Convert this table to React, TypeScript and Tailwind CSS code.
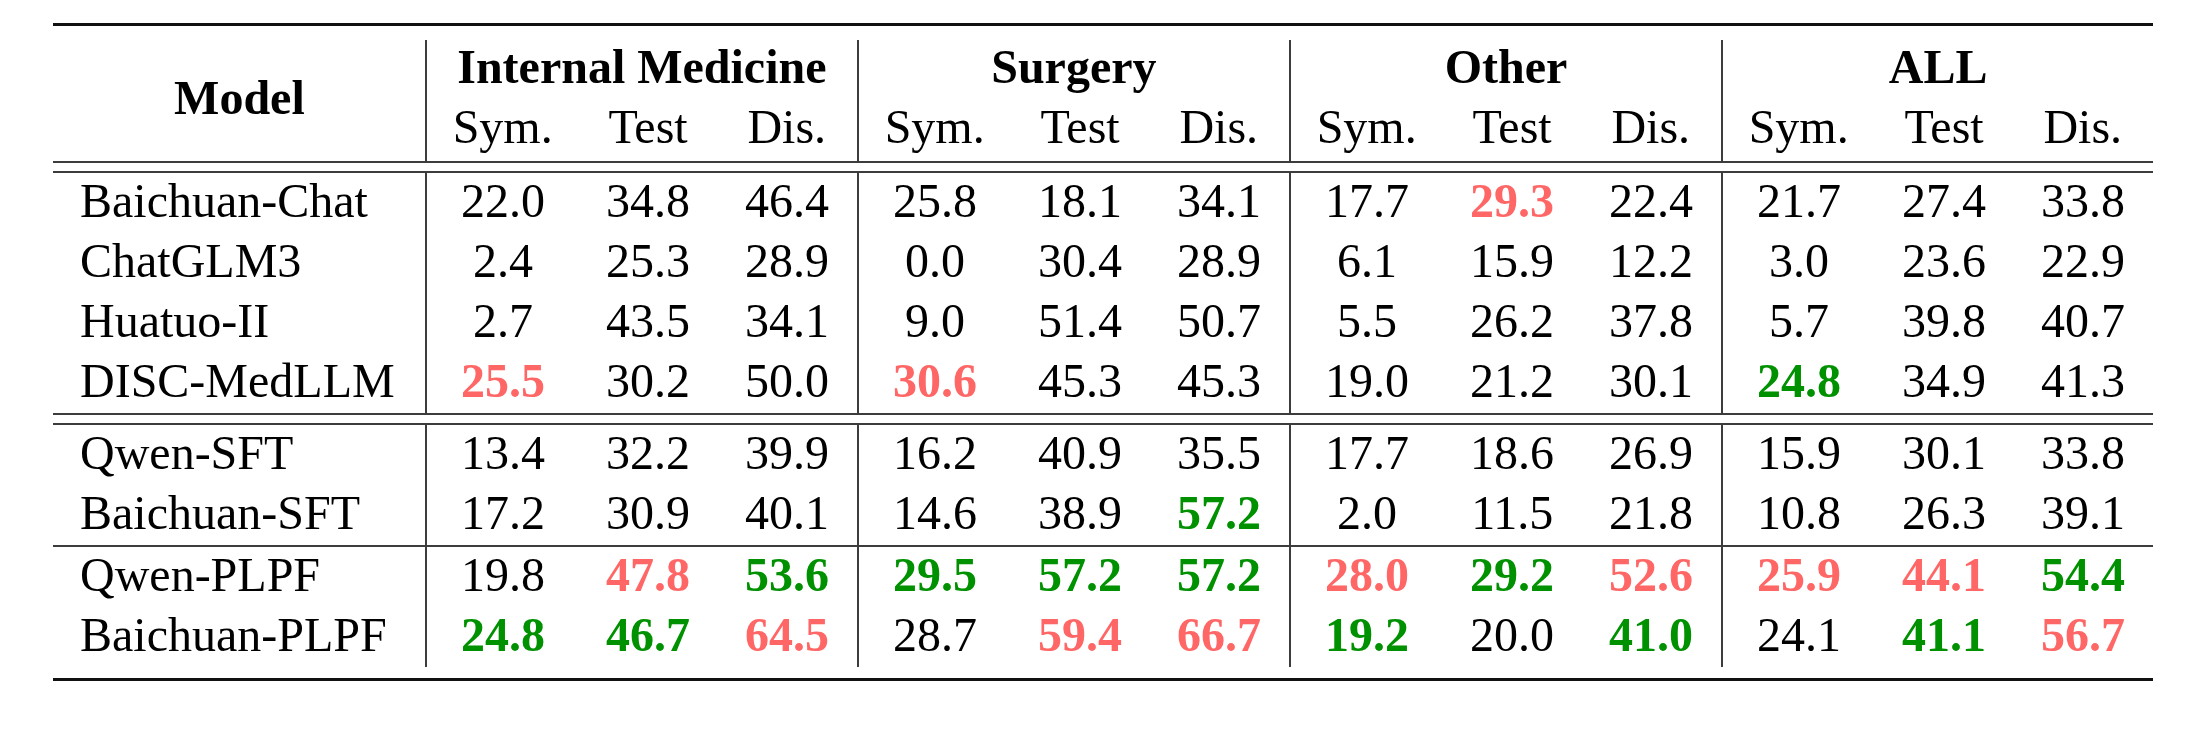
import React from "react";

type Cell = { v: string; c?: "r" | "g" };

const n = (v: string): Cell => ({ v });
const r = (v: string): Cell => ({ v, c: "r" });
const g = (v: string): Cell => ({ v, c: "g" });

const groupA: [string, Cell[]][] = [
  ["Baichuan-Chat", [n("22.0"), n("34.8"), n("46.4"), n("25.8"), n("18.1"), n("34.1"), n("17.7"), r("29.3"), n("22.4"), n("21.7"), n("27.4"), n("33.8")]],
  ["ChatGLM3", [n("2.4"), n("25.3"), n("28.9"), n("0.0"), n("30.4"), n("28.9"), n("6.1"), n("15.9"), n("12.2"), n("3.0"), n("23.6"), n("22.9")]],
  ["Huatuo-II", [n("2.7"), n("43.5"), n("34.1"), n("9.0"), n("51.4"), n("50.7"), n("5.5"), n("26.2"), n("37.8"), n("5.7"), n("39.8"), n("40.7")]],
  ["DISC-MedLLM", [r("25.5"), n("30.2"), n("50.0"), r("30.6"), n("45.3"), n("45.3"), n("19.0"), n("21.2"), n("30.1"), g("24.8"), n("34.9"), n("41.3")]],
];

const groupB: [string, Cell[]][] = [
  ["Qwen-SFT", [n("13.4"), n("32.2"), n("39.9"), n("16.2"), n("40.9"), n("35.5"), n("17.7"), n("18.6"), n("26.9"), n("15.9"), n("30.1"), n("33.8")]],
  ["Baichuan-SFT", [n("17.2"), n("30.9"), n("40.1"), n("14.6"), n("38.9"), g("57.2"), n("2.0"), n("11.5"), n("21.8"), n("10.8"), n("26.3"), n("39.1")]],
];

const groupC: [string, Cell[]][] = [
  ["Qwen-PLPF", [n("19.8"), r("47.8"), g("53.6"), g("29.5"), g("57.2"), g("57.2"), r("28.0"), g("29.2"), r("52.6"), r("25.9"), r("44.1"), g("54.4")]],
  ["Baichuan-PLPF", [g("24.8"), g("46.7"), r("64.5"), n("28.7"), r("59.4"), r("66.7"), g("19.2"), n("20.0"), g("41.0"), n("24.1"), g("41.1"), r("56.7")]],
];

const gridCols =
  "grid grid-cols-[372px_154px_138px_140px_154px_138px_140px_154px_138px_140px_154px_138px_140px]";

function T({ children, left }: { children: React.ReactNode; left?: boolean }) {
  return (
    <span
      className={`inline-block whitespace-nowrap text-[40px] leading-[45px] scale-[1.2] ${
        left ? "origin-left" : "origin-center"
      }`}
    >
      {children}
    </span>
  );
}

function Row({ name, cells, ruleTop }: { name: string; cells: Cell[]; ruleTop?: boolean }) {
  const h = ruleTop ? "h-[62px] border-t-2 border-t-[#3c3c3c]" : "h-[60px]";
  return (
    <>
      <div className={`${h} pb-[6px] pl-[27px] flex items-center justify-start`}>
        <T left>{name}</T>
      </div>
      {cells.map((c, i) => {
        const vline = i % 3 === 0 ? "border-l-2 border-l-[#3c3c3c]" : "";
        const color =
          c.c === "r" ? "text-[#ff6666] font-bold" : c.c === "g" ? "text-[#009100] font-bold" : "text-black";
        return (
          <div key={i} className={`${h} ${vline} ${color} pb-[6px] flex items-center justify-center`}>
            <T>{c.v}</T>
          </div>
        );
      })}
    </>
  );
}

function DoubleRule() {
  return (
    <div className="flex flex-col">
      <div className="h-[2px] bg-[#3c3c3c]" />
      <div className="h-[8px]" />
      <div className="h-[2px] bg-[#3c3c3c]" />
    </div>
  );
}

export default function App() {
  const groups = ["Internal Medicine", "Surgery", "Other", "ALL"];
  const subs = ["Sym.", "Test", "Dis."];
  return (
    <div className="w-[2208px] h-[731px] bg-white pt-[23px] pl-[53px] text-black text-[40px] font-['Liberation_Serif','Times_New_Roman',serif]">
      <div className="w-[2100px] flex flex-col">
        <div className="h-[3px] bg-[#111]" />
        <div className="h-[14px]" />
        <div className={`${gridCols} grid-rows-[60px_61px]`}>
          <div className="row-span-2 flex items-center justify-center font-bold pb-[7px]">
            <T>Model</T>
          </div>
          {groups.map((gname) => (
            <div
              key={gname}
              className="col-span-3 border-l-2 border-l-[#3c3c3c] flex items-center justify-center font-bold pb-[8px]"
            >
              <T>{gname}</T>
            </div>
          ))}
          {groups.map((gname) =>
            subs.map((s, i) => (
              <div
                key={gname + s}
                className={`${i === 0 ? "border-l-2 border-l-[#3c3c3c]" : ""} flex items-center justify-center pb-[9px]`}
              >
                <T>{s}</T>
              </div>
            ))
          )}
        </div>
        <DoubleRule />
        <div className={gridCols}>
          {groupA.map(([name, cells]) => (
            <Row key={name} name={name} cells={cells} />
          ))}
        </div>
        <DoubleRule />
        <div className={gridCols}>
          {groupB.map(([name, cells]) => (
            <Row key={name} name={name} cells={cells} />
          ))}
          {groupC.map(([name, cells], i) => (
            <Row key={name} name={name} cells={cells} ruleTop={i === 0} />
          ))}
        </div>
        <div className="h-[11px]" />
        <div className="h-[3px] bg-[#111]" />
      </div>
    </div>
  );
}
